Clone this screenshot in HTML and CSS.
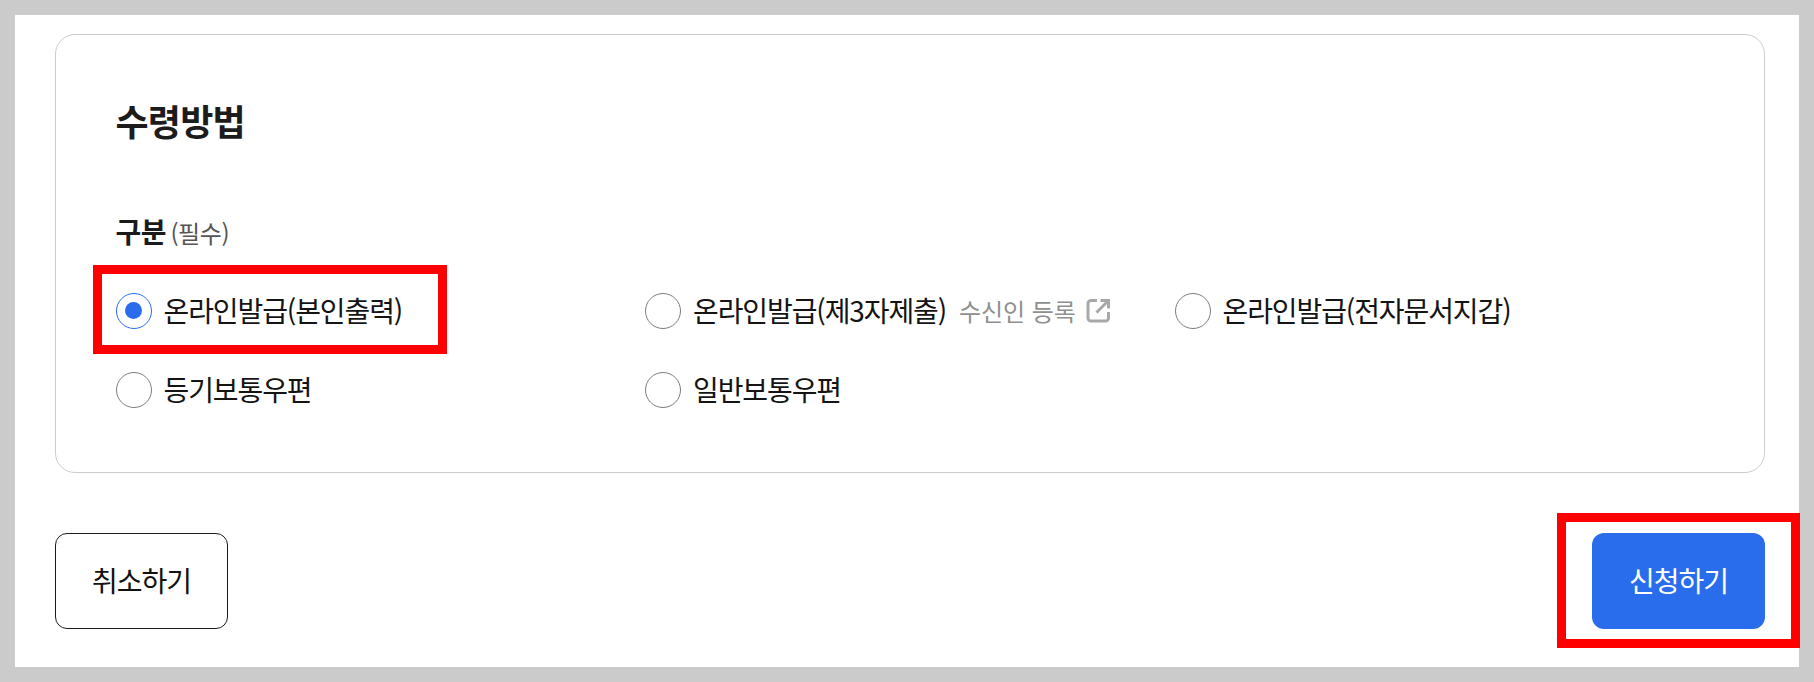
FILE: index.html
```html
<!DOCTYPE html>
<html lang="ko">
<head>
<meta charset="utf-8">
<title>수령방법</title>
<link rel="stylesheet" href="styles.css">
</head>
<body>
<div class="frame">
  <main class="sheet">
    <section class="card">
      <h2 class="title">수령방법</h2>
      <div class="field-label"><strong>구분</strong> <span class="req">(필수)</span></div>
      <div class="options">
        <label class="option"><span class="radio checked"></span><span class="opt-text">온라인발급(본인출력)</span></label>
        <label class="option"><span class="radio"></span><span class="opt-text">온라인발급(제3자제출)</span>
          <a class="reg-link">수신인 등록
            <svg class="ext" viewBox="0 0 25 25" fill="none" stroke="#a8a8a8" stroke-width="3" aria-hidden="true"><path d="M11 2.500H5a3 3 0 0 0-3 3v14.500a3 3 0 0 0 3 3h14.500a3 3 0 0 0 3-3v-6"/><path d="M10.500 14.500 22 3M14.500 2.500h8v8"/></svg>
          </a>
        </label>
        <label class="option"><span class="radio"></span><span class="opt-text">온라인발급(전자문서지갑)</span></label>
        <label class="option"><span class="radio"></span><span class="opt-text">등기보통우편</span></label>
        <label class="option"><span class="radio"></span><span class="opt-text">일반보통우편</span></label>
      </div>
    </section>
    <footer class="actions">
      <button class="btn btn-cancel">취소하기</button>
      <button class="btn btn-submit">신청하기</button>
    </footer>
  </main>
  <div class="mark mark-radio"></div>
  <div class="mark mark-submit"></div>
</div>
</body>
</html>
```
FILE: styles.css
```css
* { box-sizing: border-box; }
html, body { margin: 0; padding: 0; }
body {
  background: #cbcbcb;
  font-family: "Noto Sans CJK KR", "Noto Sans", sans-serif;
  color: #1a1a1a;
}
.frame {
  position: relative;
  width: 1814px;
  height: 682px;
  padding: 15px;
  overflow: hidden;
}
.sheet {
  background: #fff;
  height: 652px;
  padding: 19px 34px 0 40px;
}
.card {
  height: 439px;
  border: 1.5px solid #cccccc;
  border-radius: 20px;
  padding: 58px 60px 0 59.5px;
}
.title {
  margin: 0;
  font-size: 36px;
  line-height: 54px;
  font-weight: 700;
  letter-spacing: -0.8px;
  color: #1c1c1c;
}
.field-label {
  margin-top: 64px;
  font-size: 28px;
  line-height: 40px;
  letter-spacing: -0.5px;
}
.field-label strong { font-weight: 700; }
.req { font-size: 24px; color: #555; font-weight: 400; letter-spacing: -0.4px; margin-left: -3px; }
.options {
  margin-top: 39.5px;
  display: grid;
  grid-template-columns: repeat(3, 529.5px);
  row-gap: 43px;
}
.option {
  display: flex;
  align-items: center;
  height: 36px;
  font-size: 28px;
  letter-spacing: -1.1px;
  color: #141414;
}
.opt-text { margin-top: -1px; }
.radio {
  flex: none;
  width: 36px;
  height: 36px;
  margin-right: 12px;
  border: 1px solid #7d7d7d;
  border-radius: 50%;
  display: flex;
  align-items: center;
  justify-content: center;
}
.radio.checked { border-color: #2a6dec; }
.radio.checked::after {
  content: "";
  width: 17px;
  height: 17px;
  border-radius: 50%;
  background: #2a6dec;
}
.reg-link {
  display: flex;
  align-items: center;
  margin-left: 13px;
  font-size: 24px;
  color: #8f8f8f;
  letter-spacing: -0.1px;
}
.ext { width: 25px; height: 25px; margin-left: 10px; }
.actions {
  margin-top: 60px;
  display: flex;
  justify-content: space-between;
}
.btn {
  width: 173px;
  height: 96px;
  border-radius: 12px;
  font-family: inherit;
  font-size: 28px;
  letter-spacing: -1px;
  padding: 0 0 2px;
}
.btn-cancel { background: #fff; border: 1px solid #1a1a1a; color: #111; }
.btn-submit { background: #2a6dec; border: 0; color: #fff; }
.mark {
  position: absolute;
  border: 9px solid #ff0000;
}
.mark-radio { left: 93px; top: 265px; width: 354px; height: 89px; }
.mark-submit { left: 1557px; top: 513px; width: 243px; height: 135px; }
```
